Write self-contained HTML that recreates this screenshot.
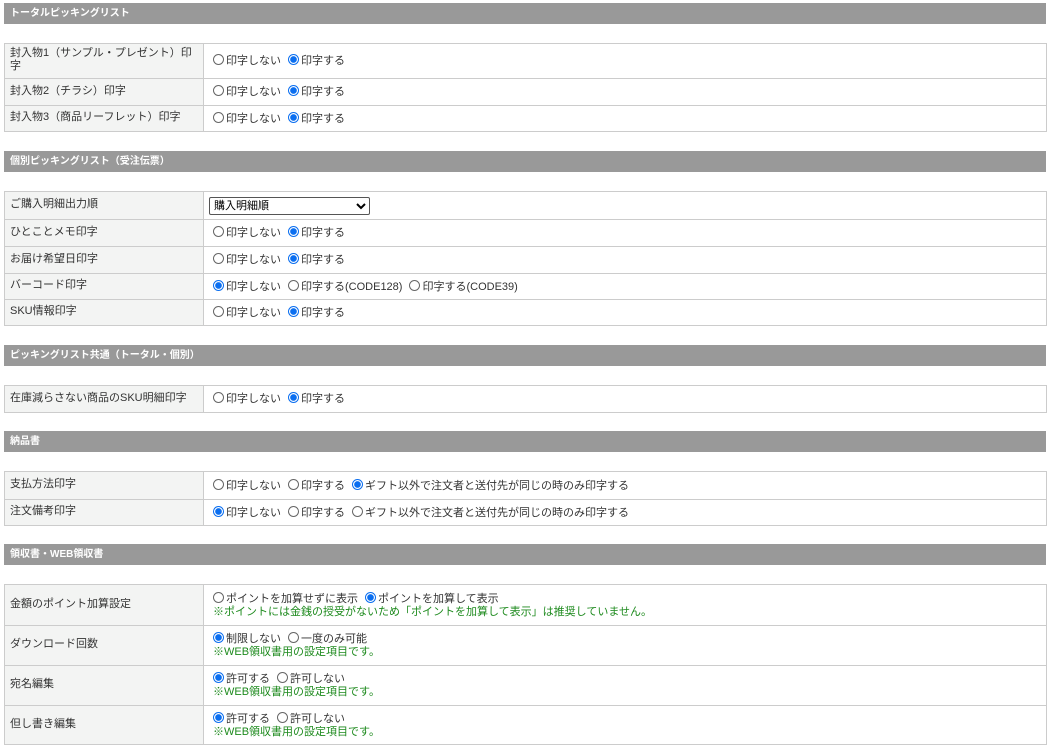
<!DOCTYPE html><html><head><meta charset="utf-8"><style>
body{margin:0;width:1050px;height:750px;background:#fff;font-family:"Liberation Sans","Noto Sans CJK JP",sans-serif;font-size:11px;color:#333;position:relative;overflow:hidden}
.h{position:absolute;left:4px;width:1042px;height:21px;background:#999;color:#fff;font-weight:bold;font-size:10px;line-height:21px;padding-left:6px;box-sizing:border-box}
.t{position:absolute;left:4px;width:1043px;border:1px solid #ccc;box-sizing:border-box}
.r{display:flex;border-top:1px solid #ccc;box-sizing:border-box}
.r:first-child{border-top:none}
.l{width:199px;background:#f3f4f3;border-right:1px solid #ccc;padding:0 5px;display:flex;align-items:center;box-sizing:border-box;line-height:13px;padding-bottom:2px}
.c{flex:1;padding-left:9px;display:flex;flex-direction:column;justify-content:center;line-height:13px}
.o{display:inline-block;width:9px;height:9px;border:1px solid #666;border-radius:50%;vertical-align:-1px;margin-right:2px;background:#fff}
.x{border-color:#0a6ef0;background:radial-gradient(circle,#0a6ef0 0 3px,#fff 3.6px)}
.g{color:#1d8a1d}
.s{margin-right:7px}
select{width:161px;height:18px;font-size:11px;font-family:inherit;border:1px solid #555;border-radius:2px;background:#fff}
</style></head><body>
<div class="h" style="top:3px">トータルピッキングリスト</div>
<div class="t" style="top:43px">
<div class="r" style="height:34px"><div class="l">封入物1（サンプル・プレゼント）印字</div><div class="c"><div><span class="o"></span><span class="s">印字しない</span><span class="o x"></span>印字する</div></div></div>
<div class="r" style="height:27px"><div class="l">封入物2（チラシ）印字</div><div class="c"><div><span class="o"></span><span class="s">印字しない</span><span class="o x"></span>印字する</div></div></div>
<div class="r" style="height:26px"><div class="l">封入物3（商品リーフレット）印字</div><div class="c"><div><span class="o"></span><span class="s">印字しない</span><span class="o x"></span>印字する</div></div></div>
</div>
<div class="h" style="top:151px">個別ピッキングリスト（受注伝票）</div>
<div class="t" style="top:191px">
<div class="r" style="height:27px"><div class="l">ご購入明細出力順</div><div class="c" style="padding-left:5px"><div><select><option>購入明細順</option></select></div></div></div>
<div class="r" style="height:27px"><div class="l">ひとことメモ印字</div><div class="c"><div><span class="o"></span><span class="s">印字しない</span><span class="o x"></span>印字する</div></div></div>
<div class="r" style="height:27px"><div class="l">お届け希望日印字</div><div class="c"><div><span class="o"></span><span class="s">印字しない</span><span class="o x"></span>印字する</div></div></div>
<div class="r" style="height:26px"><div class="l">バーコード印字</div><div class="c"><div><span class="o x"></span><span class="s">印字しない</span><span class="o"></span><span class="s">印字する(CODE128)</span><span class="o"></span>印字する(CODE39)</div></div></div>
<div class="r" style="height:26px"><div class="l">SKU情報印字</div><div class="c"><div><span class="o"></span><span class="s">印字しない</span><span class="o x"></span>印字する</div></div></div>
</div>
<div class="h" style="top:345px">ピッキングリスト共通（トータル・個別）</div>
<div class="t" style="top:385px">
<div class="r" style="height:26px"><div class="l">在庫減らさない商品のSKU明細印字</div><div class="c"><div><span class="o"></span><span class="s">印字しない</span><span class="o x"></span>印字する</div></div></div>
</div>
<div class="h" style="top:431px">納品書</div>
<div class="t" style="top:471px">
<div class="r" style="height:27px"><div class="l">支払方法印字</div><div class="c"><div><span class="o"></span><span class="s">印字しない</span><span class="o"></span><span class="s">印字する</span><span class="o x"></span>ギフト以外で注文者と送付先が同じの時のみ印字する</div></div></div>
<div class="r" style="height:26px"><div class="l">注文備考印字</div><div class="c"><div><span class="o x"></span><span class="s">印字しない</span><span class="o"></span><span class="s">印字する</span><span class="o"></span>ギフト以外で注文者と送付先が同じの時のみ印字する</div></div></div>
</div>
<div class="h" style="top:544px">領収書・WEB領収書</div>
<div class="t" style="top:584px">
<div class="r" style="height:40px"><div class="l">金額のポイント加算設定</div><div class="c"><div><span class="o"></span><span class="s">ポイントを加算せずに表示</span><span class="o x"></span>ポイントを加算して表示</div><div class="g">※ポイントには金銭の授受がないため「ポイントを加算して表示」は推奨していません。</div></div></div>
<div class="r" style="height:40px"><div class="l">ダウンロード回数</div><div class="c"><div><span class="o x"></span><span class="s">制限しない</span><span class="o"></span>一度のみ可能</div><div class="g">※WEB領収書用の設定項目です。</div></div></div>
<div class="r" style="height:40px"><div class="l">宛名編集</div><div class="c"><div><span class="o x"></span><span class="s">許可する</span><span class="o"></span>許可しない</div><div class="g">※WEB領収書用の設定項目です。</div></div></div>
<div class="r" style="height:39px"><div class="l">但し書き編集</div><div class="c"><div><span class="o x"></span><span class="s">許可する</span><span class="o"></span>許可しない</div><div class="g">※WEB領収書用の設定項目です。</div></div></div>
</div>
</body></html>
